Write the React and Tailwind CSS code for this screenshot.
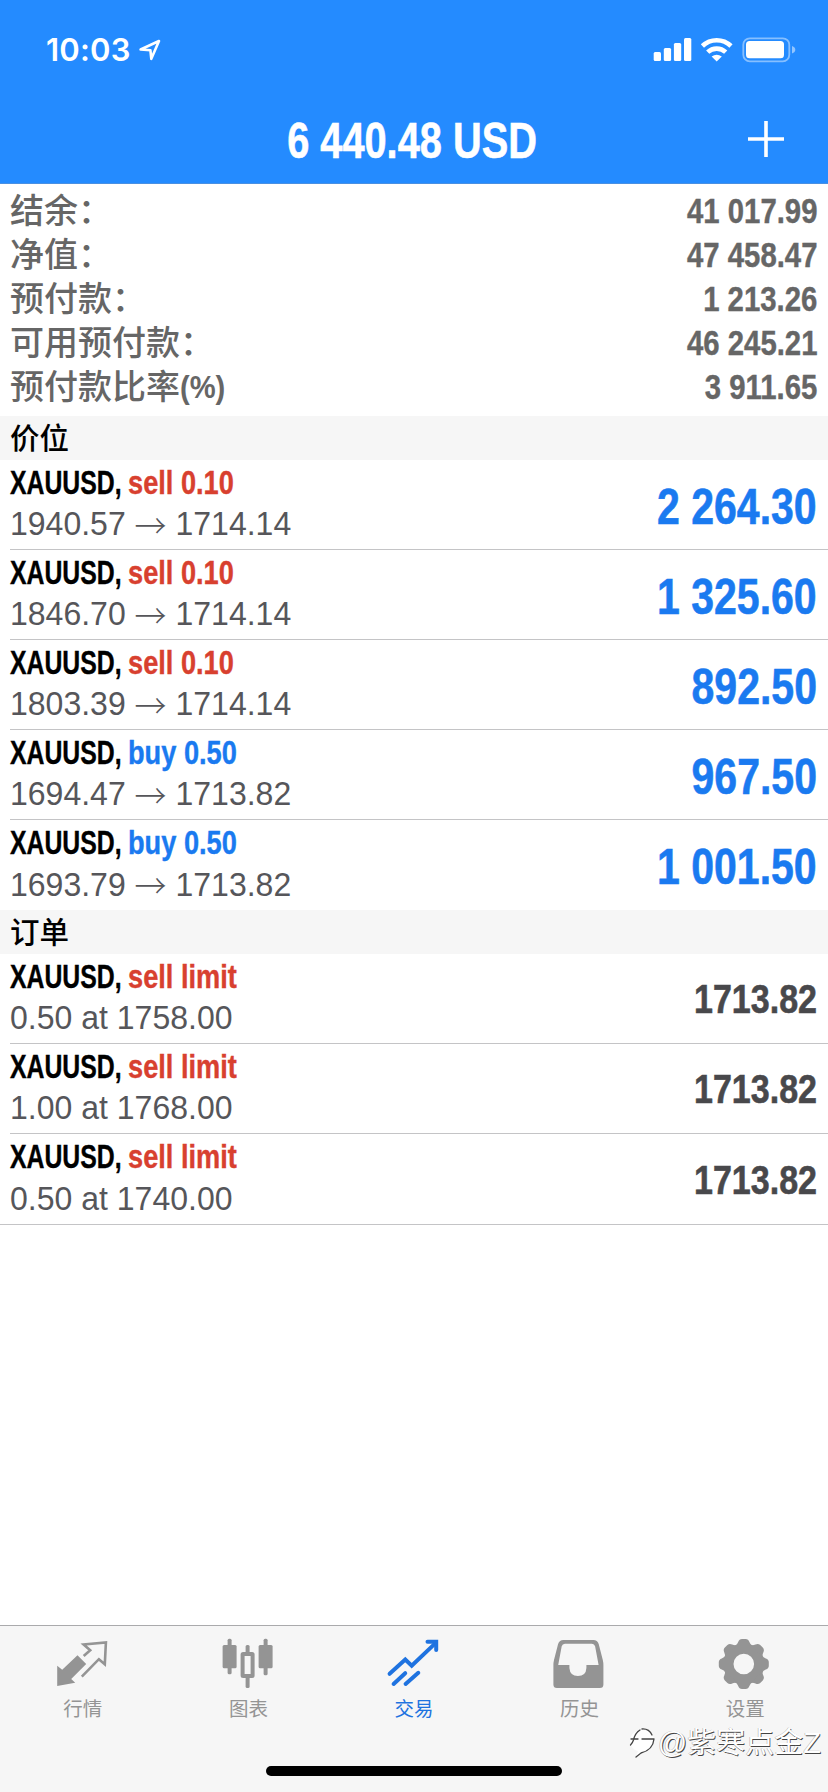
const summary = [
  ['结余：', '41 017.99'],
  ['净值：', '47 458.47'],
  ['预付款：', '1 213.26'],
  ['可用预付款：', '46 245.21'],
  ['预付款比率', '3 911.65', '(%)'],
];

const positions = [
  { side: 'sell', volume: '0.10', open: '1940.57', current: '1714.14', profit: '2 264.30' },
  { side: 'sell', volume: '0.10', open: '1846.70', current: '1714.14', profit: '1 325.60' },
  { side: 'sell', volume: '0.10', open: '1803.39', current: '1714.14', profit: '892.50' },
  { side: 'buy', volume: '0.50', open: '1694.47', current: '1713.82', profit: '967.50' },
  { side: 'buy', volume: '0.50', open: '1693.79', current: '1713.82', profit: '1 001.50' },
];

const orders = [
  { volume: '0.50', price: '1758.00', current: '1713.82' },
  { volume: '1.00', price: '1768.00', current: '1713.82' },
  { volume: '0.50', price: '1740.00', current: '1713.82' },
];

const cjk = "font-['Liberation_Sans','Noto_Sans_CJK_SC',sans-serif]";

function StatusBar() {
  return (
    <div className="flex h-[90px] items-start justify-between pl-[46px] pr-[32px] pt-[37px] text-white">
      <div className="flex items-center">
        <span className="w-[92px] whitespace-nowrap font-['Inter',sans-serif] text-[31px] font-semibold leading-[26px] tracking-[0.2px]">
          10:03
        </span>
        <svg width="24" height="26" viewBox="138 37 24 26" fill="none" stroke="currentColor" strokeWidth="2.6" strokeLinejoin="round">
          <path d="M140.6 49.5 L159 41 L151.3 58.8 L150.4 50.2 Z" />
        </svg>
      </div>
      <svg width="144" height="26" viewBox="651 37 144 26" fill="currentColor">
        <rect x="652.7" y="52" width="7.3" height="9" rx="1.5" />
        <rect x="662.8" y="48" width="7.3" height="13" rx="1.5" />
        <rect x="672.9" y="43" width="7.3" height="18" rx="1.5" />
        <rect x="683" y="38" width="7.3" height="23" rx="1.5" />
        <g fill="none" stroke="currentColor" strokeWidth="4.6">
          <path d="M701.4 46 A20.5 20.5 0 0 1 730 46" />
          <path d="M706.7 52.2 A13 13 0 0 1 724.7 52.2" />
        </g>
        <path d="M710.6 56.6 Q715.7 52.8 720.8 56.6 L715.7 61.4 Z" />
        <rect x="742.3" y="38.3" width="46" height="23" rx="6.5" fill="none" stroke="currentColor" strokeWidth="1.8" opacity="0.45" />
        <rect x="745" y="41" width="38" height="17.3" rx="3.5" />
        <path d="M791 46 Q794.3 47.2 794.3 49.8 Q794.3 52.4 791 53.6 Z" opacity="0.5" />
      </svg>
    </div>
  );
}

function TitleBar() {
  return (
    <div className="grid h-[93px] grid-cols-[80px_1fr_80px] items-center">
      <span />
      <h1 className="mt-[9px] -translate-x-[2px] scale-x-[0.795] whitespace-nowrap text-center text-[50px] font-bold leading-[56px] text-white [-webkit-text-stroke:0.6px_white]">
        6 440.48 USD
      </h1>
      <svg width="36" height="36" viewBox="0 0 36 36" stroke="white" strokeWidth="3.6" className="mt-[5px]">
        <path d="M18 0 V36 M0 18 H36" />
      </svg>
    </div>
  );
}

function SectionHeader({ children }) {
  return (
    <h2 className="flex h-[44px] items-center bg-[#f6f6f6] pl-[10px] text-[29.5px] font-medium leading-[44px] text-black">
      <span className="pt-[2px]">{children}</span>
    </h2>
  );
}

function Row({ action, sell, detail, value, big, last }) {
  return (
    <li className="pl-[10px]">
      <div className={'flex h-[90px] items-center justify-between pr-[11px] ' + (last ? '' : 'border-b border-[#c4c4c6]')}>
        <div className="pb-[2px]">
          <div className="flex h-[41px] items-center whitespace-nowrap text-[33.5px] font-bold [-webkit-text-stroke:0.4px_currentColor]">
            <span className="w-[118px] text-black">
              <span className="inline-block origin-left scale-x-[0.74]">XAUUSD,</span>
            </span>
            <span className={'origin-left scale-x-[0.812] ' + (sell ? 'text-[#d8402f]' : 'text-[#1a7af0]')}>{action}</span>
          </div>
          <div className="flex h-[41px] origin-left scale-x-[0.97] items-center whitespace-pre text-[33px] text-[#56565a]">
            {detail}
          </div>
        </div>
        <span
          className={
            'origin-right whitespace-nowrap font-bold [-webkit-text-stroke:0.6px_currentColor] ' +
            (big ? 'mt-[5px] scale-x-[0.82] text-[50px] text-[#1a7af0]' : 'mt-[2px] scale-x-[0.82] text-[41.5px] text-[#48484b]')
          }
        >
          {value}
        </span>
      </div>
    </li>
  );
}

function QuotesIcon() {
  return (
    <svg width="56" height="56" viewBox="54.8 1636 56 56" fill="none">
      <path d="M57 1665.7 L62 1669.8 L77.3 1655.3 L86 1664 L71 1679 L75 1682.7 L57 1686 Z" fill="currentColor" />
      <path d="M83.5 1656 L90 1650.2 L83.4 1644.4 L105.7 1642.4 L104.6 1664.2 L98.7 1659.2 L81.6 1676.6" stroke="currentColor" strokeWidth="2.6" />
    </svg>
  );
}

function ChartIcon() {
  return (
    <svg width="56" height="56" viewBox="220.4 1636 56 56" fill="currentColor">
      <rect x="223" y="1645" width="14" height="23.3" rx="1.5" />
      <rect x="228" y="1638.8" width="4" height="35.4" rx="1.5" />
      <rect x="243" y="1654" width="10" height="22" rx="0.5" fill="none" stroke="currentColor" strokeWidth="4" />
      <rect x="246" y="1645" width="4" height="8" rx="1.5" />
      <rect x="246" y="1677" width="4" height="11" rx="1.5" />
      <rect x="259" y="1645" width="14" height="23.3" rx="1.5" />
      <rect x="264" y="1638.8" width="4" height="36.4" rx="1.5" />
    </svg>
  );
}

function TradeIcon() {
  return (
    <svg width="56" height="56" viewBox="386 1636 56 56" fill="none" stroke="currentColor" strokeWidth="4" strokeLinecap="round">
      <path d="M389.6 1673.8 L405.3 1659.6 L411.7 1665.7 L436 1642.6" />
      <path d="M427.5 1641.8 H436.2 V1650" strokeLinejoin="miter" />
      <path d="M393.6 1684 L405.2 1673.2 M405.6 1684 L418.3 1672.8" />
    </svg>
  );
}

function HistoryIcon() {
  return (
    <svg width="56" height="56" viewBox="551.6 1636 56 56" fill="currentColor">
      <path
        fillRule="evenodd"
        d="M563 1640 H593 Q597 1640 598.3 1644 L602.4 1660 Q603 1662.5 603 1665 V1684.5 Q603 1688 599.5 1688 H556.5 Q553 1688 553 1684.5 V1665 Q553 1662.5 553.6 1660 L557.7 1644 Q559 1640 563 1640 Z M564.5 1643.8 Q562 1643.8 561.3 1646.3 L557.8 1665 H569 V1668 Q569.6 1676 577.5 1676 Q585.6 1676 586 1668 V1665 H598.2 L594.7 1646.3 Q594 1643.8 591.5 1643.8 Z"
      />
    </svg>
  );
}

function SettingsIcon() {
  return (
    <svg width="56" height="56" viewBox="717.2 1636 56 56" fill="none" stroke="currentColor">
      <circle cx="744" cy="1664" r="15.3" strokeWidth="10" />
      {[0, 45, 90, 135, 180, 225, 270, 315].map((angle) => (
        <path
          key={angle}
          transform={`rotate(${angle} 744 1664)`}
          d="M735 1646 Q737.6 1644.6 738.4 1642 Q739.4 1639 742.2 1639 H745.8 Q748.6 1639 749.6 1642 Q750.4 1644.6 753 1646 Z"
          fill="currentColor"
          stroke="none"
        />
      ))}
    </svg>
  );
}

const tabs = [
  { label: '行情', Icon: QuotesIcon },
  { label: '图表', Icon: ChartIcon },
  { label: '交易', Icon: TradeIcon, active: true },
  { label: '历史', Icon: HistoryIcon },
  { label: '设置', Icon: SettingsIcon },
];

function TabBar() {
  return (
    <nav className="relative flex h-[167px] flex-col items-center border-t border-[#aaaaac] bg-[#f6f6f6]">
      <div className="flex w-full">
        {tabs.map(({ label, Icon, active }) => (
          <div key={label} className={'flex flex-1 flex-col items-center pt-[10px] ' + (active ? 'text-[#1f73e0]' : 'text-[#949494]')}>
            <Icon />
            <span className="mt-[5px] text-[19.5px] leading-[24px]">{label}</span>
          </div>
        ))}
      </div>
      <div className="mt-[45px] h-[10px] w-[296px] rounded-full bg-black" />
      <div className="absolute right-[7px] top-[95px] flex items-center whitespace-nowrap text-[29px] leading-[44px] text-white">
        <svg width="30" height="36" viewBox="0 0 30 36" fill="none" strokeLinecap="round">
          <path d="M12 5 Q3 7 2 15 Q2 24 10 26 L8 31 Q24 27 26 14 Q25 4 12 5 Z" fill="white" />
          <path d="M3 14 H10 M12 5 Q7 8 5.5 15 Q4.5 18 2.5 20 M14 4 Q21 3.5 24 10 M14 14 H26 M26 14 Q25 25 13 28 L8 32" stroke="#444" strokeWidth="1.3" />
        </svg>
        <span className="[text-shadow:0.8px_0.8px_0_#444,-0.5px_-0.5px_0_#aaa]">@紫寒点金Z</span>
      </div>
    </nav>
  );
}

function Arrow() {
  return <span className="inline-block font-['Noto_Sans_CJK_SC',sans-serif] font-light leading-[41px]">→</span>;
}

export default function App() {
  return (
    <div className={'flex h-[1792px] w-[828px] flex-col overflow-hidden bg-white ' + cjk}>
      <header className="h-[184px] border-b border-[#4a90e2] bg-[#248bff]">
        <StatusBar />
        <TitleBar />
      </header>
      <dl className="h-[232px] pl-[10px] pr-[11px] pt-[5px] text-[#666]">
        {summary.map(([label, value, suffix]) => (
          <div key={label} className="flex h-[44px] items-center justify-between">
            <dt className="flex whitespace-nowrap text-[34px] font-medium leading-[44px]">
              {label}
              {suffix && <span className="origin-left scale-x-[0.91] text-[32px] font-bold">{suffix}</span>}
            </dt>
            <dd className="origin-right scale-x-[0.85] whitespace-nowrap text-[34.5px] font-bold leading-[44px] [-webkit-text-stroke:0.4px_currentColor]">
              {value}
            </dd>
          </div>
        ))}
      </dl>
      <SectionHeader>价位</SectionHeader>
      <ul className="h-[450px]">
        {positions.map((p, i) => (
          <Row
            key={p.open}
            action={`${p.side} ${p.volume}`}
            sell={p.side === 'sell'}
            detail={
              <>
                {p.open + ' '}
                <Arrow />
                {' ' + p.current}
              </>
            }
            value={p.profit}
            big
            last={i === positions.length - 1}
          />
        ))}
      </ul>
      <SectionHeader>订单</SectionHeader>
      <ul className="h-[271px] border-b border-[#c4c4c6]">
        {orders.map((o, i) => (
          <Row
            key={o.price}
            action="sell limit"
            sell
            detail={`${o.volume} at ${o.price}`}
            value={o.current}
            last={i === orders.length - 1}
          />
        ))}
      </ul>
      <div className="flex-1" />
      <TabBar />
    </div>
  );
}
